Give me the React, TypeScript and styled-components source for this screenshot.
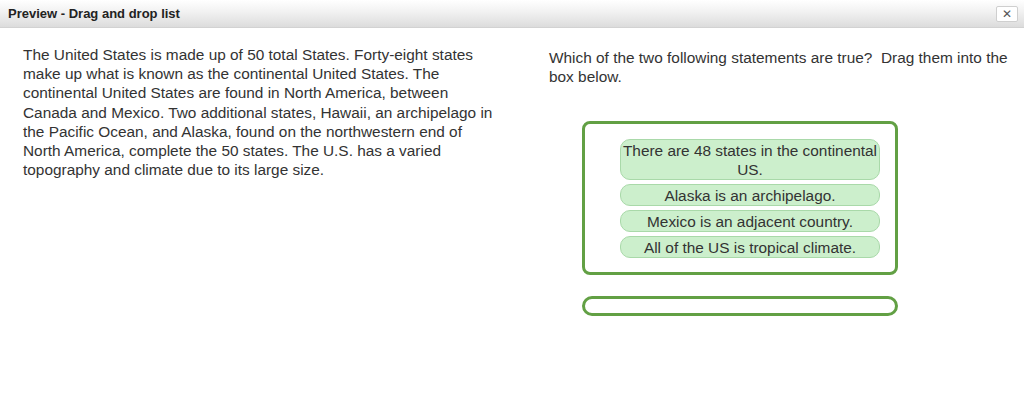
import styled, { createGlobalStyle } from "styled-components";

const GlobalStyle = createGlobalStyle`
  html, body {
    margin: 0;
    padding: 0;
    background: #ffffff;
  }
  body {
    font-family: "Liberation Sans", Arial, sans-serif;
    color: #333333;
  }
`;

const Page = styled.div`
  width: 1024px;
  height: 413px;
  display: flex;
  flex-direction: column;
  overflow: hidden;
`;

const TitleBar = styled.div`
  height: 27px;
  display: flex;
  align-items: center;
  justify-content: space-between;
  padding: 0 6px 0 8px;
  background: linear-gradient(to bottom, #ffffff 0%, #f1f1f1 45%, #dcdcdc 100%);
  border-bottom: 1px solid #d2d2d2;
`;

const Title = styled.span`
  font-size: 13px;
  font-weight: bold;
  color: #222222;
`;

const CloseButton = styled.button`
  width: 22px;
  height: 16px;
  padding: 0;
  margin-top: 1px;
  display: flex;
  align-items: center;
  justify-content: center;
  background: #ffffff;
  border: 1px solid #cfcfcf;
  border-radius: 2px;
  color: #555555;
  font-family: "DejaVu Sans", sans-serif;
  font-size: 12px;
  font-weight: bold;
  line-height: 1;
`;

const Body = styled.div`
  display: flex;
  padding: 17px 0 0 23px;
`;

const LeftColumn = styled.div`
  width: 477px;
  margin-right: 49px;
`;

const RightColumn = styled.div`
  width: 470px;
  display: flex;
  flex-direction: column;
`;

const Paragraph = styled.p`
  margin: 0;
  font-size: 15.4px;
  line-height: 19.2px;
  color: #333333;
`;

const Question = styled(Paragraph)`
  margin-top: 3px;
`;

const DropBox = styled.div<{ $empty?: boolean }>`
  margin-left: 33px;
  border: 3px solid #62a044;
  border-radius: ${(p) => (p.$empty ? "10px" : "8px")};
  box-sizing: border-box;
  width: 316px;
  height: ${(p) => (p.$empty ? "20px" : "auto")};
  padding: ${(p) => (p.$empty ? "0" : "15px 15px 14px 35px")};
  display: flex;
  flex-direction: column;
  align-items: flex-end;
  gap: 4px;
`;

const TopBox = styled(DropBox)`
  margin-top: 35px;
`;

const BottomBox = styled(DropBox)`
  margin-top: 21px;
`;

const Item = styled.div`
  width: 260px;
  box-sizing: border-box;
  min-height: 22px;
  padding: 1px 0 0;
  background: #ccefcc;
  border: 1px solid #a9d9a9;
  border-radius: 10px;
  text-align: center;
  font-size: 15.4px;
  line-height: 19px;
  color: #333333;
`;

const statements = [
  "There are 48 states in the continental US.",
  "Alaska is an archipelago.",
  "Mexico is an adjacent country.",
  "All of the US is tropical climate.",
];

export default function App() {
  return (
    <Page>
      <GlobalStyle />
      <TitleBar>
        <Title>Preview - Drag and drop list</Title>
        <CloseButton aria-label="close">✕</CloseButton>
      </TitleBar>
      <Body>
        <LeftColumn>
          <Paragraph>
            The United States is made up of 50 total States. Forty-eight states
            make up what is known as the continental United States. The
            continental United States are found in North America, between
            Canada and Mexico. Two additional states, Hawaii, an archipelago in
            the Pacific Ocean, and Alaska, found on the northwestern end of
            North America, complete the 50 states. The U.S. has a varied
            topography and climate due to its large size.
          </Paragraph>
        </LeftColumn>
        <RightColumn>
          <Question>
            Which of the two following statements are true?&nbsp; Drag them
            into the box below.
          </Question>
          <TopBox>
            {statements.map((s) => (
              <Item key={s}>{s}</Item>
            ))}
          </TopBox>
          <BottomBox $empty />
        </RightColumn>
      </Body>
    </Page>
  );
}
